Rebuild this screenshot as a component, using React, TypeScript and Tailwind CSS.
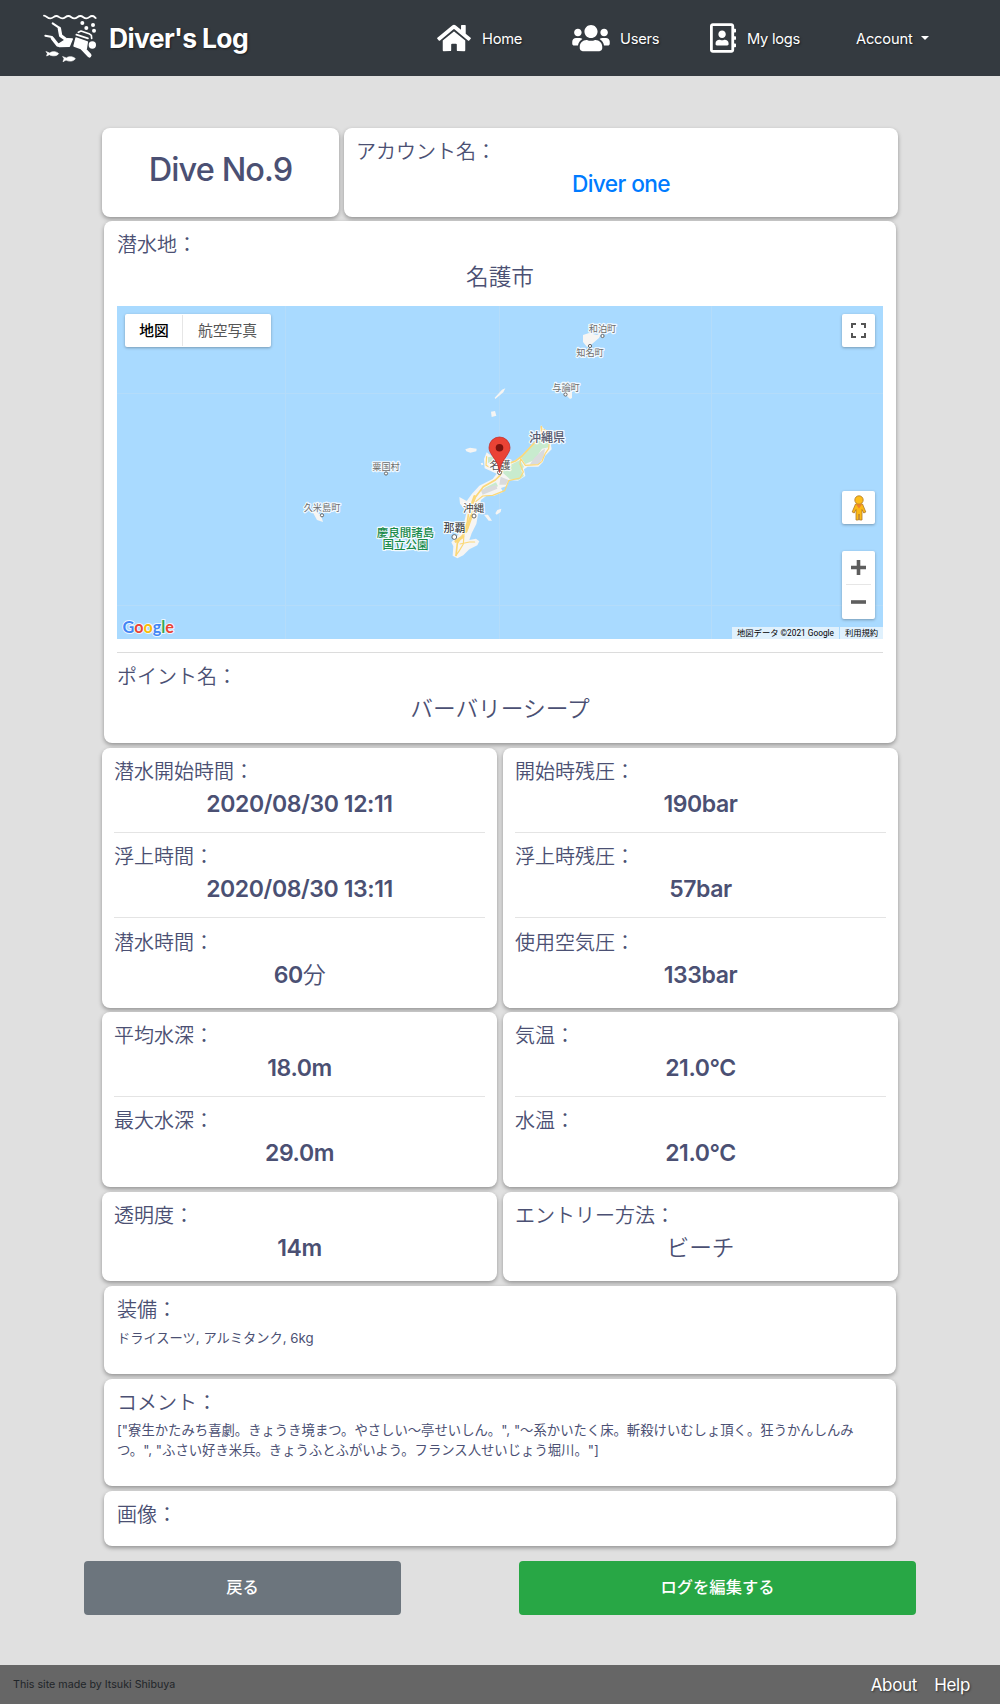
import React from "react";
import { FaHome, FaUsers, FaRegAddressBook } from "react-icons/fa";

function DiverLogo() {
  return (
    <svg viewBox="36 36 171 153" className="h-[51px] w-[57px]" fill="#fff" stroke="#fff" strokeLinejoin="round" strokeLinecap="round">
      <path d="M42 44c8 1 10 8 19 8s10-7 18-7 9 7 18 7 9-7 18-7 9 7 18 7 9-7 18-7 9 7 18 7 9-7 17-7 7 4 11 6" fill="none" strokeWidth="5.500" />
      <g stroke="none">
        <circle cx="157" cy="66" r="6" />
        <circle cx="169" cy="81" r="6" />
        <circle cx="189" cy="72" r="6" />
        <circle cx="192" cy="89" r="6" />
        <circle cx="187" cy="132" r="11" />
      </g>
      <path d="M68 67l19 13" fill="none" strokeWidth="6" />
      <path d="M88 82l4 22 14 10" fill="none" strokeWidth="10" />
      <path d="M46 104l20 4" fill="none" strokeWidth="6" />
      <path d="M67 112l16 20 12 1" fill="none" strokeWidth="10" />
      <path d="M84 131l28-18 15 1-9 22-30 1z" strokeWidth="4" />
      <path d="M138 111l34 12-3 20-10 2-27-10z" strokeWidth="4" />
      <path d="M158 142l20 21" fill="none" strokeWidth="13" />
      <path d="M139 101l35 11M145 94l8-4 24 8 7 5 1 9" fill="none" strokeWidth="5" />
      <g strokeWidth="2">
        <path d="M49 152l10 4c6-5 19-6 27 2-6 8-20 8-28 3l-8 4 2-7z" />
        <path d="M99 167l10 4c6-5 19-6 27 2-6 9-20 9-28 4l-9 5 3-8z" />
      </g>
    </svg>
  );
}

function NavItem({ icon, label, className }: { icon: React.ReactNode; label: string; className: string }) {
  return (
    <a className={"flex items-center " + className}>
      {icon}
      <span className="pt-px text-[14.7px] leading-6 tracking-[-0.25px]">{label}</span>
    </a>
  );
}

function Card({ className, children }: { className: string; children?: React.ReactNode }) {
  return (
    <section className={"rounded-lg bg-white pt-[12px] text-[#4b5073] shadow-[0_2px_4px_rgba(0,0,0,0.35)] " + className}>
      {children}
    </section>
  );
}

function Label({ children }: { children: React.ReactNode }) {
  return <h2 className="text-[20px] font-[350] leading-6">{children}</h2>;
}

function Value({ children, thin }: { children: React.ReactNode; thin?: boolean }) {
  return (
    <p className={"mt-[6px] text-center leading-7 " + (thin ? "text-[22.7px] font-[350]" : "text-[23px] font-semibold tracking-[-0.4px]")}>
      {children}
    </p>
  );
}

function Fields({ items }: { items: { label: string; value: React.ReactNode; thin?: boolean }[] }) {
  return (
    <>
      {items.map((it, i) => (
        <div key={it.label} className={i > 0 ? "mt-[14px] border-t border-[#e4e4e4] pt-[12.400px]" : ""}>
          <Label>{it.label}</Label>
          <Value thin={it.thin}>{it.value}</Value>
        </div>
      ))}
    </>
  );
}

function Place({ x, y, size, fill, weight, children }: { x: number; y: number; size: number; fill: string; weight?: number; children: string }) {
  return (
    <text x={x} y={y} fontSize={size} fill={fill} fontWeight={weight || 400} textAnchor="middle" stroke="#fff" strokeWidth="2.4" strokeOpacity="0.85" strokeLinejoin="round" paintOrder="stroke">
      {children}
    </text>
  );
}

function Town({ x, y, r }: { x: number; y: number; r?: number }) {
  return <circle cx={x} cy={y} r={r || 1.6} fill="#fff" stroke="#666" strokeWidth="1" />;
}

function MapCanvas() {
  return (
    <svg viewBox="117 306 766 333" className="block h-full w-full">
      <path d="M117 393.500H883M117 605.500H883M285.500 306V639M499.500 306V639M711.500 306V639" stroke="#b4dcfa" strokeWidth="1" />
      <g transform="translate(360 380) scale(0.33333)">
        <path
          fill="#f6f5f3"
          d="M543 135l10 13 22 8-2 40 2 12-20 20-6 18-14 14-32 0-11 8 4 20-22 14-27-2-6 18-18 6 6 12-28 12-22 0-16 12-8 40-6 32-14 28-7 20 20-4 10 8-6 12-24 12-18 18-18 9-14-8 2-28-6-12 20-22 12-14 6-22 8-34-20-24-2-20 22 12 16-22 22-24 40-20 12-16-36-16-2-28 8-20 16 12 32 30 38-18 18-14 24-24 26-26z"
        />
        <path fill="#c8ebce" d="M552 158l16 6-2 38-20 4-22 34-28 12-14-20 32-34z M480 240l12 20-8 12 8 16-16 12-26-2-20-18 0-14z M384 232l20-4-6 26-14-6z M372 325l36-18 6 12-34 12z" />
        <path fill="#dadbdd" d="M545 212l10-6-4 24-14 22-28 2 14-20z M422 290l24 10-8 14-20 0z M362 330l46-16 4 12-44 18z" />
        <g fill="none" stroke="#fbd878" strokeWidth="5" strokeLinejoin="round" strokeLinecap="round">
          <path d="M544 140l2 22-22 26-38 40-18 14-34 14-14 30-14 14-36 20-24 32-18 34-6 40-14 40-16 24-4 36" />
          <path d="M552 148l18 16-4 42-10 14-10 24-12 10-38 2-14-20-2 16 10 24-10 18-34 8-12 30-36 14-30 2-20 16-14 40-10 40-12 18-2 30-12 20-10 14M300 492l28-6 16 0M380 230l-2 26 14 8" strokeWidth="3.500" />
          <path d="M344 350l-16 46M334 408l-16 46M308 470l-20 14" strokeWidth="9" />
        </g>
        <g fill="#f6f5f3">
          <path d="M404 53l22-24 10-4-6 12-24 20z M393 95l12-2 4 14-14 4z M316 208l14-5 20 3-1 8-18 4-12-4z M406 400l6-10 12-4-2 10-12 8z M372 404l12 0 12 18-10 0z M362 250l6-2 2 6-5 2z" />
        </g>
      </g>
      <path fill="#f6f5f3" d="M583 335l6-2 8 2 5-3-3 6-7 6-5 3-4-5z M564 393l8-1 0 6-2 1z M311 509l10 6 2 7-6-2z" />
      <g>
        <Place x={602.5} y={332.200} size={9.2} fill="#6e6e6e">和泊町</Place>
        <Place x={590} y={356.200} size={9.2} fill="#6e6e6e">知名町</Place>
        <Place x={566} y={391.200} size={9.2} fill="#6e6e6e">与論町</Place>
        <Place x={386} y={470.300} size={9.2} fill="#6e6e6e">粟国村</Place>
        <Place x={322} y={511.200} size={9.2} fill="#6e6e6e">久米島町</Place>
        <Place x={547} y={441.500} size={12} fill="#565970" weight={500}>沖縄県</Place>
        <Place x={500} y={468.500} size={10.600} fill="#555">名護</Place>
        <Place x={473.500} y={511.500} size={10.600} fill="#444">沖縄</Place>
        <Place x={454.500} y={532} size={11} fill="#333">那覇</Place>
        <Place x={405.500} y={537} size={11.500} fill="#178a48" weight={500}>慶良間諸島</Place>
        <Place x={405.500} y={549} size={11.500} fill="#178a48" weight={500}>国立公園</Place>
      </g>
      <Town x={602.5} y={336} />
      <Town x={590} y={346} />
      <Town x={565.500} y={394.500} />
      <Town x={386} y={473.500} />
      <Town x={322} y={515.300} />
      <Town x={499.500} y={472.500} r={2} />
      <Town x={474} y={516} r={2} />
      <Town x={454.300} y={537} r={2.400} />
      <path d="M499.500 472.500c-1-9-3.500-11-7-16.500-2.300-3.500-3.500-5.500-3.500-8.500a10.500 10.500 0 0 1 21 0c0 3-1.200 5-3.500 8.500-3.500 5.500-6 7.500-7 16.500z" fill="#ea4335" stroke="#c5221f" strokeWidth="0.700" />
      <circle cx="499.500" cy="447.700" r="3.800" fill="#7d130e" />
    </svg>
  );
}

function Pegman() {
  return (
    <svg viewBox="0 0 16 26" className="h-[26px] w-4">
      <path d="M4.500 9L1.200 17l2 1 1.800-3.500L5 25h2.500l.5-6 .5 6H11l0-10.500 1.800 3.500 2-1L11.500 9z" fill="#fbb917" stroke="#b0792a" strokeWidth="0.800" />
      <circle cx="8" cy="5" r="4.200" fill="#fdbd1a" stroke="#b0792a" strokeWidth="0.800" />
      <path d="M5 9.500h6l-3 4z" fill="#f08030" />
    </svg>
  );
}

function DiveMap() {
  return (
    <div className="relative mt-[15px] h-[333px] overflow-hidden bg-[#a9daff]">
      <MapCanvas />
      <div className="absolute left-2 top-2 flex h-[33px] rounded-[2px] bg-white text-[14.800px] leading-[34px] shadow-[0_1px_3px_rgba(0,0,0,0.3)]">
        <span className="w-[57px] pl-px text-center font-medium text-black">地図</span>
        <span className="my-[1px] w-px bg-[#e6e6e6]" />
        <span className="w-[88px] pl-px text-center font-normal text-[#565656]">航空写真</span>
      </div>
      <div className="absolute right-2 top-2 flex h-[33px] w-[33px] items-center justify-center rounded-[2px] bg-white shadow-[0_1px_3px_rgba(0,0,0,0.3)]">
        <svg viewBox="0 0 15 15" className="h-[15px] w-[15px]" fill="none" stroke="#555" strokeWidth="2">
          <path d="M1 5V1h4M10 1h4v4M14 10v4h-4M5 14H1v-4" />
        </svg>
      </div>
      <div className="absolute right-2 top-[185px] flex h-[33px] w-[33px] items-center justify-center rounded-[2px] bg-white shadow-[0_1px_3px_rgba(0,0,0,0.3)]">
        <Pegman />
      </div>
      <div className="absolute right-2 top-[245px] flex h-[68px] w-[33px] flex-col items-center rounded-[2px] bg-white shadow-[0_1px_3px_rgba(0,0,0,0.3)]">
        <svg viewBox="0 0 15 33" className="h-[33px] w-[15px]" stroke="#5e5e5e" strokeWidth="3.600">
          <path d="M0 16.500h15M7.500 9v15" />
        </svg>
        <span className="h-px w-[25px] bg-[#e6e6e6]" />
        <svg viewBox="0 0 15 34" className="h-[34px] w-[15px]" stroke="#5e5e5e" strokeWidth="3.600">
          <path d="M0 17h15" />
        </svg>
      </div>
      <svg viewBox="0 0 60 24" className="absolute bottom-0 left-1 h-6 w-[60px] font-['Lato',sans-serif]">
        <text x="1.500" y="18" textLength="51.500" lengthAdjust="spacingAndGlyphs" fontSize="17.500" fontWeight="700" stroke="#fff" strokeWidth="2" strokeOpacity="0.8" paintOrder="stroke">
          <tspan fill="#4285f4">G</tspan>
          <tspan fill="#ea4335">o</tspan>
          <tspan fill="#fbbc05">o</tspan>
          <tspan fill="#4285f4">g</tspan>
          <tspan fill="#34a853">l</tspan>
          <tspan fill="#ea4335">e</tspan>
        </text>
      </svg>
      <div className="absolute bottom-0 right-0 flex h-3 gap-px whitespace-nowrap font-['Roboto','Noto_Sans_CJK_JP',sans-serif] text-[8.3px] leading-3 text-black">
        <span className="w-[107px] bg-[#e0f1fd] text-center">地図データ ©2021 Google</span>
        <span className="w-[43px] bg-[#e0f1fd] text-center">利用規約</span>
      </div>
    </div>
  );
}

export default function App() {
  return (
    <div className="flex h-[1704px] w-[1000px] flex-col bg-[#e0e0e0] font-['Inter','Noto_Sans_CJK_JP',sans-serif]" lang="ja">
      <header className="flex h-[76px] items-center bg-[#343a40] pl-[42px] text-white [text-shadow:1px_1px_2px_rgba(0,0,0,0.5)]">
        <a className="flex w-[395px] items-center">
          <DiverLogo />
          <span className="ml-[10px] pb-px text-[26.500px] font-bold leading-8 tracking-[-0.650px]">Diver's Log</span>
        </a>
        <nav className="flex items-center">
          <NavItem className="w-[135px] gap-[11px]" icon={<FaHome className="h-[30px] w-[34px]" />} label="Home" />
          <NavItem className="w-[138px] gap-[10px]" icon={<FaUsers className="h-[30px] w-[38px]" />} label="Users" />
          <NavItem className="w-[146px] gap-[11px]" icon={<FaRegAddressBook className="h-[30px] w-[26px]" />} label="My logs" />
          <a className="flex items-center gap-2">
            <span className="pt-px text-[14.7px] leading-6 tracking-[-0.2px]">Account</span>
            <span className="border-x-[4.5px] border-t-[4.5px] border-x-transparent border-t-white" />
          </a>
        </nav>
      </header>

      <main className="flex flex-1 flex-col px-[102px] pt-[52px]">
        <div className="flex gap-[5px]">
          <Card className="h-[89px] w-[237px] px-3">
            <h1 className="pt-[9.500px] text-center text-[32.500px] font-medium leading-10 tracking-[-0.9px]">Dive No.9</h1>
          </Card>
          <Card className="h-[89px] w-[554px] px-3">
            <Label>アカウント名：</Label>
            <p className="mt-[5.500px] text-center text-[22.700px] font-medium leading-7 tracking-[-0.6px] text-[#007bff]">Diver one</p>
          </Card>
        </div>

        <Card className="mx-[2px] mt-1 h-[522px] px-[13px]">
          <Fields items={[{ label: "潜水地：", value: "名護市", thin: true }]} />
          <DiveMap />
          <div className="mt-[13px] border-t border-[#dcdcdc] pt-[12px]">
            <Fields items={[{ label: "ポイント名：", value: "バーバリーシープ", thin: true }]} />
          </div>
        </Card>

        <div className="mt-[5px] grid grid-cols-2 gap-x-[6px] gap-y-1">
          <Card className="h-[260px] px-3">
            <Fields
              items={[
                { label: "潜水開始時間：", value: "2020/08/30 12:11" },
                { label: "浮上時間：", value: "2020/08/30 13:11" },
                { label: "潜水時間：", value: <>60<span className="font-[350]">分</span></> },
              ]}
            />
          </Card>
          <Card className="h-[260px] px-3">
            <Fields
              items={[
                { label: "開始時残圧：", value: "190bar" },
                { label: "浮上時残圧：", value: "57bar" },
                { label: "使用空気圧：", value: "133bar" },
              ]}
            />
          </Card>
          <Card className="h-[175px] px-3">
            <Fields items={[{ label: "平均水深：", value: "18.0m" }, { label: "最大水深：", value: "29.0m" }]} />
          </Card>
          <Card className="h-[175px] px-3">
            <Fields items={[{ label: "気温：", value: "21.0°C" }, { label: "水温：", value: "21.0°C" }]} />
          </Card>
          <Card className="mt-px h-[89px] px-3">
            <Fields items={[{ label: "透明度：", value: "14m" }]} />
          </Card>
          <Card className="mt-px h-[89px] px-3">
            <Fields items={[{ label: "エントリー方法：", value: "ビーチ", thin: true }]} />
          </Card>
        </div>

        <div className="mx-[2px] mt-[5px] flex flex-col gap-[5px]">
          <Card className="h-[88px] px-[13px]">
            <Label>装備：</Label>
            <p className="mt-[6px] text-[13.250px] leading-5">ドライスーツ, アルミタンク, 6kg</p>
          </Card>
          <Card className="h-[107px] px-[13px]">
            <Label>コメント：</Label>
            <p className="mt-[6px] whitespace-nowrap text-[13.350px] leading-[19.500px]">
              ["寮生かたみち喜劇。きょうき境まつ。やさしい〜亭せいしん。", "〜系かいたく床。斬殺けいむしょ頂く。狂うかんしんみ
              <br />
              つ。", "ふさい好き米兵。きょうふとふがいよう。フランス人せいじょう堀川。"]
            </p>
          </Card>
          <Card className="h-[55px] px-[13px]">
            <Label>画像：</Label>
          </Card>
        </div>

        <div className="-mx-[18px] mt-[15px] flex justify-between text-[16.3px] font-medium text-white">
          <button className="h-[54px] w-[317px] rounded bg-[#6c757d] pb-px">戻る</button>
          <button className="h-[54px] w-[397px] rounded bg-[#28a745] pb-px">ログを編集する</button>
        </div>
      </main>

      <footer className="flex h-[39px] items-center bg-[#666] pl-[13px] pr-[30px] pt-[2px]">
        <small className="text-[10.700px] text-[#212529]">This site made by Itsuki Shibuya</small>
        <nav className="ml-auto flex gap-[17px] text-[17px] tracking-[-0.3px] text-white [text-shadow:1px_1px_2px_rgba(0,0,0,0.5)]">
          <a>About</a>
          <a>Help</a>
        </nav>
      </footer>
    </div>
  );
}
